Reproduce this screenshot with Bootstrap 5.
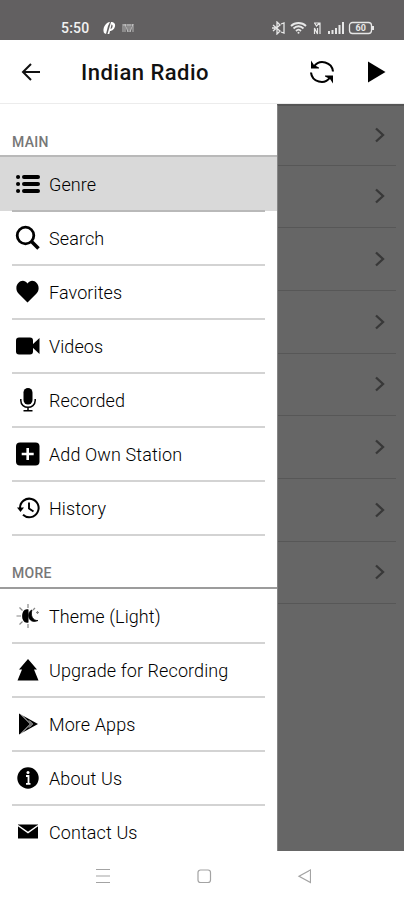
<!DOCTYPE html>
<html lang="en">
<head>
<meta charset="utf-8">
<meta name="viewport" content="width=device-width, initial-scale=1">
<title>Indian Radio</title>
<link href="https://cdn.jsdelivr.net/npm/bootstrap@5.3.0/dist/css/bootstrap.min.css" rel="stylesheet">
<style>
body{font-family:Roboto,sans-serif;color:#111;height:900px;width:404px}
svg{display:block;flex:none}
.status{height:40px;background:#626061;color:#f1f1f1;padding:15px 28px 0 61px}
.clock{font-size:14px;font-weight:500;letter-spacing:.2px;line-height:24px;width:29px;white-space:nowrap}
.topbar{height:64px;padding-left:20px;padding-right:18px;border-bottom:1px solid #ececec}
.title{font-size:22px;font-weight:500;letter-spacing:.48px;margin-left:39px;line-height:30px;padding-top:2px}
.play{margin-left:32px}
.main-area{height:747px}
.drawer{width:277px;background:#fff}
.section{height:54px;padding:0 12px 5px;font-size:14px;font-weight:500;letter-spacing:.3px;line-height:18px;color:#777;border-bottom:2px solid #9c9c9c}
.section-first{border-color:#b9b9b9;height:53px;padding-bottom:4px}
.entry{height:54px;padding:0 12px;flex:none}
.entry-in{height:54.5px;border-bottom:2px solid #d3d3d3;padding-left:3px;padding-top:2px;gap:9px;font-size:18px;font-weight:300;letter-spacing:.1px;line-height:24px;color:#000}
.entry-in span{padding-top:1px}
.entry.selected{background:#d9d9d9}
.selected .entry-in{border-color:#b9b9b9}
.backdrop-list{background:#666;border-top:2px solid #555;border-left:1px solid #858585}
.dim{height:62.7px;margin-right:8px;padding-right:10px;border-bottom:1px solid #575757;flex:none}
.dim:first-child{height:59.5px}
.sysbar{height:49px}
</style>
</head>
<body class="bg-white overflow-hidden d-flex flex-column">
<header class="status d-flex align-items-center flex-shrink-0">
  <span class="clock">5:50</span>
  <svg class="ms-2 ps-1" width="20" height="14" viewBox="0 0 16 14"><path d="M2 12C0 7 4 1 8 1L6 5 4 13zM5.500 13L9 1c7 0 4 9-1 9l-.7 3z" fill="#fff"/><path d="M9.500 3.500L8.500 8c2 0 3-4.500 1-4.500z" fill="#626061"/></svg>
  <svg class="ms-1" width="12" height="10" viewBox="0 0 12 10"><path d="M1 1v8M3 9V1l3 8V1M8 1v8l3-8v8M1 2h10" fill="none" stroke="#ccc" stroke-width=".8"/></svg>
  <div class="d-flex align-items-center ms-auto">
    <svg width="104" height="14" viewBox="0 0 104 14" fill="none" stroke="#e7e7e7">
      <path d="M1 4l7 6-3 3V1l3 3-7 6M9 3l3-1v10l-3-1M0 7h3" stroke-width="1.300"/>
      <path d="M19 5c4-4 11-4 15 0M21.500 7.500c3-3 7-3 10 0M24 10c2-2 3-2 5 0" stroke-width="1.800"/><circle cx="26.500" cy="11.800" r="1" fill="#e7e7e7" stroke="none"/>
      <path d="M42.500 13V7l3 6V7M42 2h6v5M42.500 2l2 3 3-3M48 7v6" stroke-width="1.200"/>
      <path d="M57 13v-3M60.500 13V9M64 13V7M67.500 13V4M71 13V1" stroke-width="2"/>
      <rect x="77.500" y="1.500" width="22" height="11" rx="3" stroke-width="1.300"/><path d="M101 5v4" stroke-width="2"/><text x="83.500" y="10.300" font-size="9" font-weight="700" fill="#e7e7e7" stroke="none">60</text>
    </svg>
  </div>
</header>
<nav class="topbar d-flex align-items-center flex-shrink-0">
  <svg width="22" height="20" viewBox="0 0 22 20"><path d="M20 10H3M11 2l-8 8 8 8" fill="none" stroke="#111" stroke-width="2"/></svg>
  <span class="title">Indian Radio</span>
  <svg class="ms-auto" width="26" height="26" viewBox="0 0 26 26"><path d="M5 7.500A10.500 10.500 0 0 1 24 12.500M21 18.500A10.500 10.500 0 0 1 2 13.500" fill="none" stroke="#000" stroke-width="2.100"/><path d="M2 1.500L5 6l5 2.500v1H2zM24 24.500L21 20l-5-2.500v-1h8z"/></svg>
  <svg class="play" width="19" height="22" viewBox="0 0 19 22"><path d="M1 .5L18.500 11 1 21.500z"/></svg>
</nav>
<main class="main-area d-flex overflow-hidden flex-shrink-0">
  <aside class="drawer d-flex flex-column flex-shrink-0 overflow-hidden">
    <div class="section section-first d-flex align-items-end flex-shrink-0">MAIN</div>
    <div class="entry selected"><div class="entry-in d-flex align-items-center"><svg width="25" height="26" viewBox="0 0 25 26"><path d="M9 6h14M9 13h14M9 20h14" stroke="#000" stroke-width="4" stroke-linecap="round"/><path d="M3 6h.1M3 13h.1M3 20h.1" stroke="#000" stroke-width="4" stroke-linecap="round"/></svg><span>Genre</span></div></div>
    <div class="entry"><div class="entry-in d-flex align-items-center"><svg width="25" height="26" viewBox="0 0 25 26" fill="none" stroke="#000"><circle cx="10.500" cy="10.500" r="8.300" stroke-width="2.800"/><path d="M16.500 16.500l7 7" stroke-width="3.500"/></svg><span>Search</span></div></div>
    <div class="entry"><div class="entry-in d-flex align-items-center"><svg width="25" height="26" viewBox="0 0 25 26"><path d="M12.500 23.500L3.500 14.500C-3 7 7-3 12.500 4.500 18-3 28 7 21.500 14.500z"/></svg><span>Favorites</span></div></div>
    <div class="entry"><div class="entry-in d-flex align-items-center"><svg width="25" height="26" viewBox="0 0 25 26"><rect x="1" y="4.500" width="17" height="17" rx="3"/><path d="M17 12l7.500-7v16L17 14z"/></svg><span>Videos</span></div></div>
    <div class="entry"><div class="entry-in d-flex align-items-center"><svg width="25" height="26" viewBox="0 0 25 26"><rect x="8.500" y="1" width="9" height="16.500" rx="4.500"/><path d="M5.800 12v1.500c0 9 14.400 9 14.400 0V12M13 20v4M8.500 23.800h9" fill="none" stroke="#000" stroke-width="1.500"/></svg><span>Recorded</span></div></div>
    <div class="entry"><div class="entry-in d-flex align-items-center"><svg width="25" height="26" viewBox="0 0 25 26"><rect x="1" y="1.500" width="23.500" height="23" rx="4"/><path d="M12.700 7v12M6.700 13h12" stroke="#fff" stroke-width="2.600"/></svg><span>Add Own Station</span></div></div>
    <div class="entry"><div class="entry-in d-flex align-items-center"><svg width="25" height="26" viewBox="0 0 25 26"><path d="M5 13a9.300 9.300 0 1 1 3 6.800" fill="none" stroke="#000" stroke-width="2"/><path d="M2 12.500h7L5.500 17z"/><path d="M14 7.500v6l4.500 3" fill="none" stroke="#000" stroke-width="1.900"/></svg><span>History</span></div></div>
    <div class="section d-flex align-items-end flex-shrink-0">MORE</div>
    <div class="entry"><div class="entry-in d-flex align-items-center"><svg width="25" height="26" viewBox="0 0 25 26"><path d="M13 1v4M13 21v4M1.500 13H6M4.500 4.500l3 3M4.500 21.500l3-3M20 5l-2 2M21 9.500h3M22.500 8v3" stroke="#888" stroke-width="1.200"/><path d="M13.500 6.500C5 4 5 22 13.500 19.500z"/><path d="M17 7c-6 2-4 15 6 10.500-5 .5-8-5-6-10.500z" stroke="#000" stroke-width=".8"/></svg><span>Theme (Light)</span></div></div>
    <div class="entry"><div class="entry-in d-flex align-items-center"><svg width="25" height="26" viewBox="0 0 25 26"><path d="M13 2l9 10.500h-3l4.500 11h-21l4.500-11H4z"/></svg><span>Upgrade for Recording</span></div></div>
    <div class="entry"><div class="entry-in d-flex align-items-center"><svg width="25" height="26" viewBox="0 0 25 26"><path d="M4 2.500L23 13 4 23.500z"/><path d="M6 3.500L15.500 13 6 22.500M14 9.500l3.500 3.500-3.500 3.500" fill="none" stroke="#fff" stroke-width=".9"/></svg><span>More Apps</span></div></div>
    <div class="entry"><div class="entry-in d-flex align-items-center"><svg width="25" height="26" viewBox="0 0 25 26"><circle cx="13" cy="13" r="10.700"/><path d="M11 11h2.500v7.500M11 18.800h4.500" fill="none" stroke="#fff" stroke-width="1.800"/><circle cx="13" cy="7.500" r="1.500" fill="#fff"/></svg><span>About Us</span></div></div>
    <div class="entry"><div class="entry-in d-flex align-items-center"><svg width="25" height="26" viewBox="0 0 25 26"><path d="M3 5.500h20v14H3z"/><path d="M3 6.500l10 7 10-7" fill="none" stroke="#fff" stroke-width="1.500"/></svg><span>Contact Us</span></div></div>
  </aside>
  <section class="backdrop-list flex-grow-1">
    <div class="dim d-flex align-items-center justify-content-end"><svg width="12" height="16" viewBox="0 0 12 16"><path d="M2 1.500L9 8l-7 6.500" fill="none" stroke="#383838" stroke-width="2.300"/></svg></div>
    <div class="dim d-flex align-items-center justify-content-end"><svg width="12" height="16" viewBox="0 0 12 16"><path d="M2 1.500L9 8l-7 6.500" fill="none" stroke="#383838" stroke-width="2.300"/></svg></div>
    <div class="dim d-flex align-items-center justify-content-end"><svg width="12" height="16" viewBox="0 0 12 16"><path d="M2 1.500L9 8l-7 6.500" fill="none" stroke="#383838" stroke-width="2.300"/></svg></div>
    <div class="dim d-flex align-items-center justify-content-end"><svg width="12" height="16" viewBox="0 0 12 16"><path d="M2 1.500L9 8l-7 6.500" fill="none" stroke="#383838" stroke-width="2.300"/></svg></div>
    <div class="dim d-flex align-items-center justify-content-end"><svg width="12" height="16" viewBox="0 0 12 16"><path d="M2 1.500L9 8l-7 6.500" fill="none" stroke="#383838" stroke-width="2.300"/></svg></div>
    <div class="dim d-flex align-items-center justify-content-end"><svg width="12" height="16" viewBox="0 0 12 16"><path d="M2 1.500L9 8l-7 6.500" fill="none" stroke="#383838" stroke-width="2.300"/></svg></div>
    <div class="dim d-flex align-items-center justify-content-end"><svg width="12" height="16" viewBox="0 0 12 16"><path d="M2 1.500L9 8l-7 6.500" fill="none" stroke="#383838" stroke-width="2.300"/></svg></div>
    <div class="dim d-flex align-items-center justify-content-end"><svg width="12" height="16" viewBox="0 0 12 16"><path d="M2 1.500L9 8l-7 6.500" fill="none" stroke="#383838" stroke-width="2.300"/></svg></div>
  </section>
</main>
<footer class="sysbar d-flex align-items-center justify-content-center bg-white flex-shrink-0">
  <svg width="218" height="16" viewBox="0 0 218 16" fill="none" stroke="#a3a3a3" stroke-width="1.200"><path d="M3 1.500h14M3 8h14M3 14.500h14"/><rect x="105" y="2" width="12.500" height="12.500" rx="2.500"/><path d="M217.500 2v12.500L206 8.200z"/></svg>
</footer>
<script src="https://cdn.jsdelivr.net/npm/bootstrap@5.3.0/dist/js/bootstrap.bundle.min.js"></script>
</body>
</html>
